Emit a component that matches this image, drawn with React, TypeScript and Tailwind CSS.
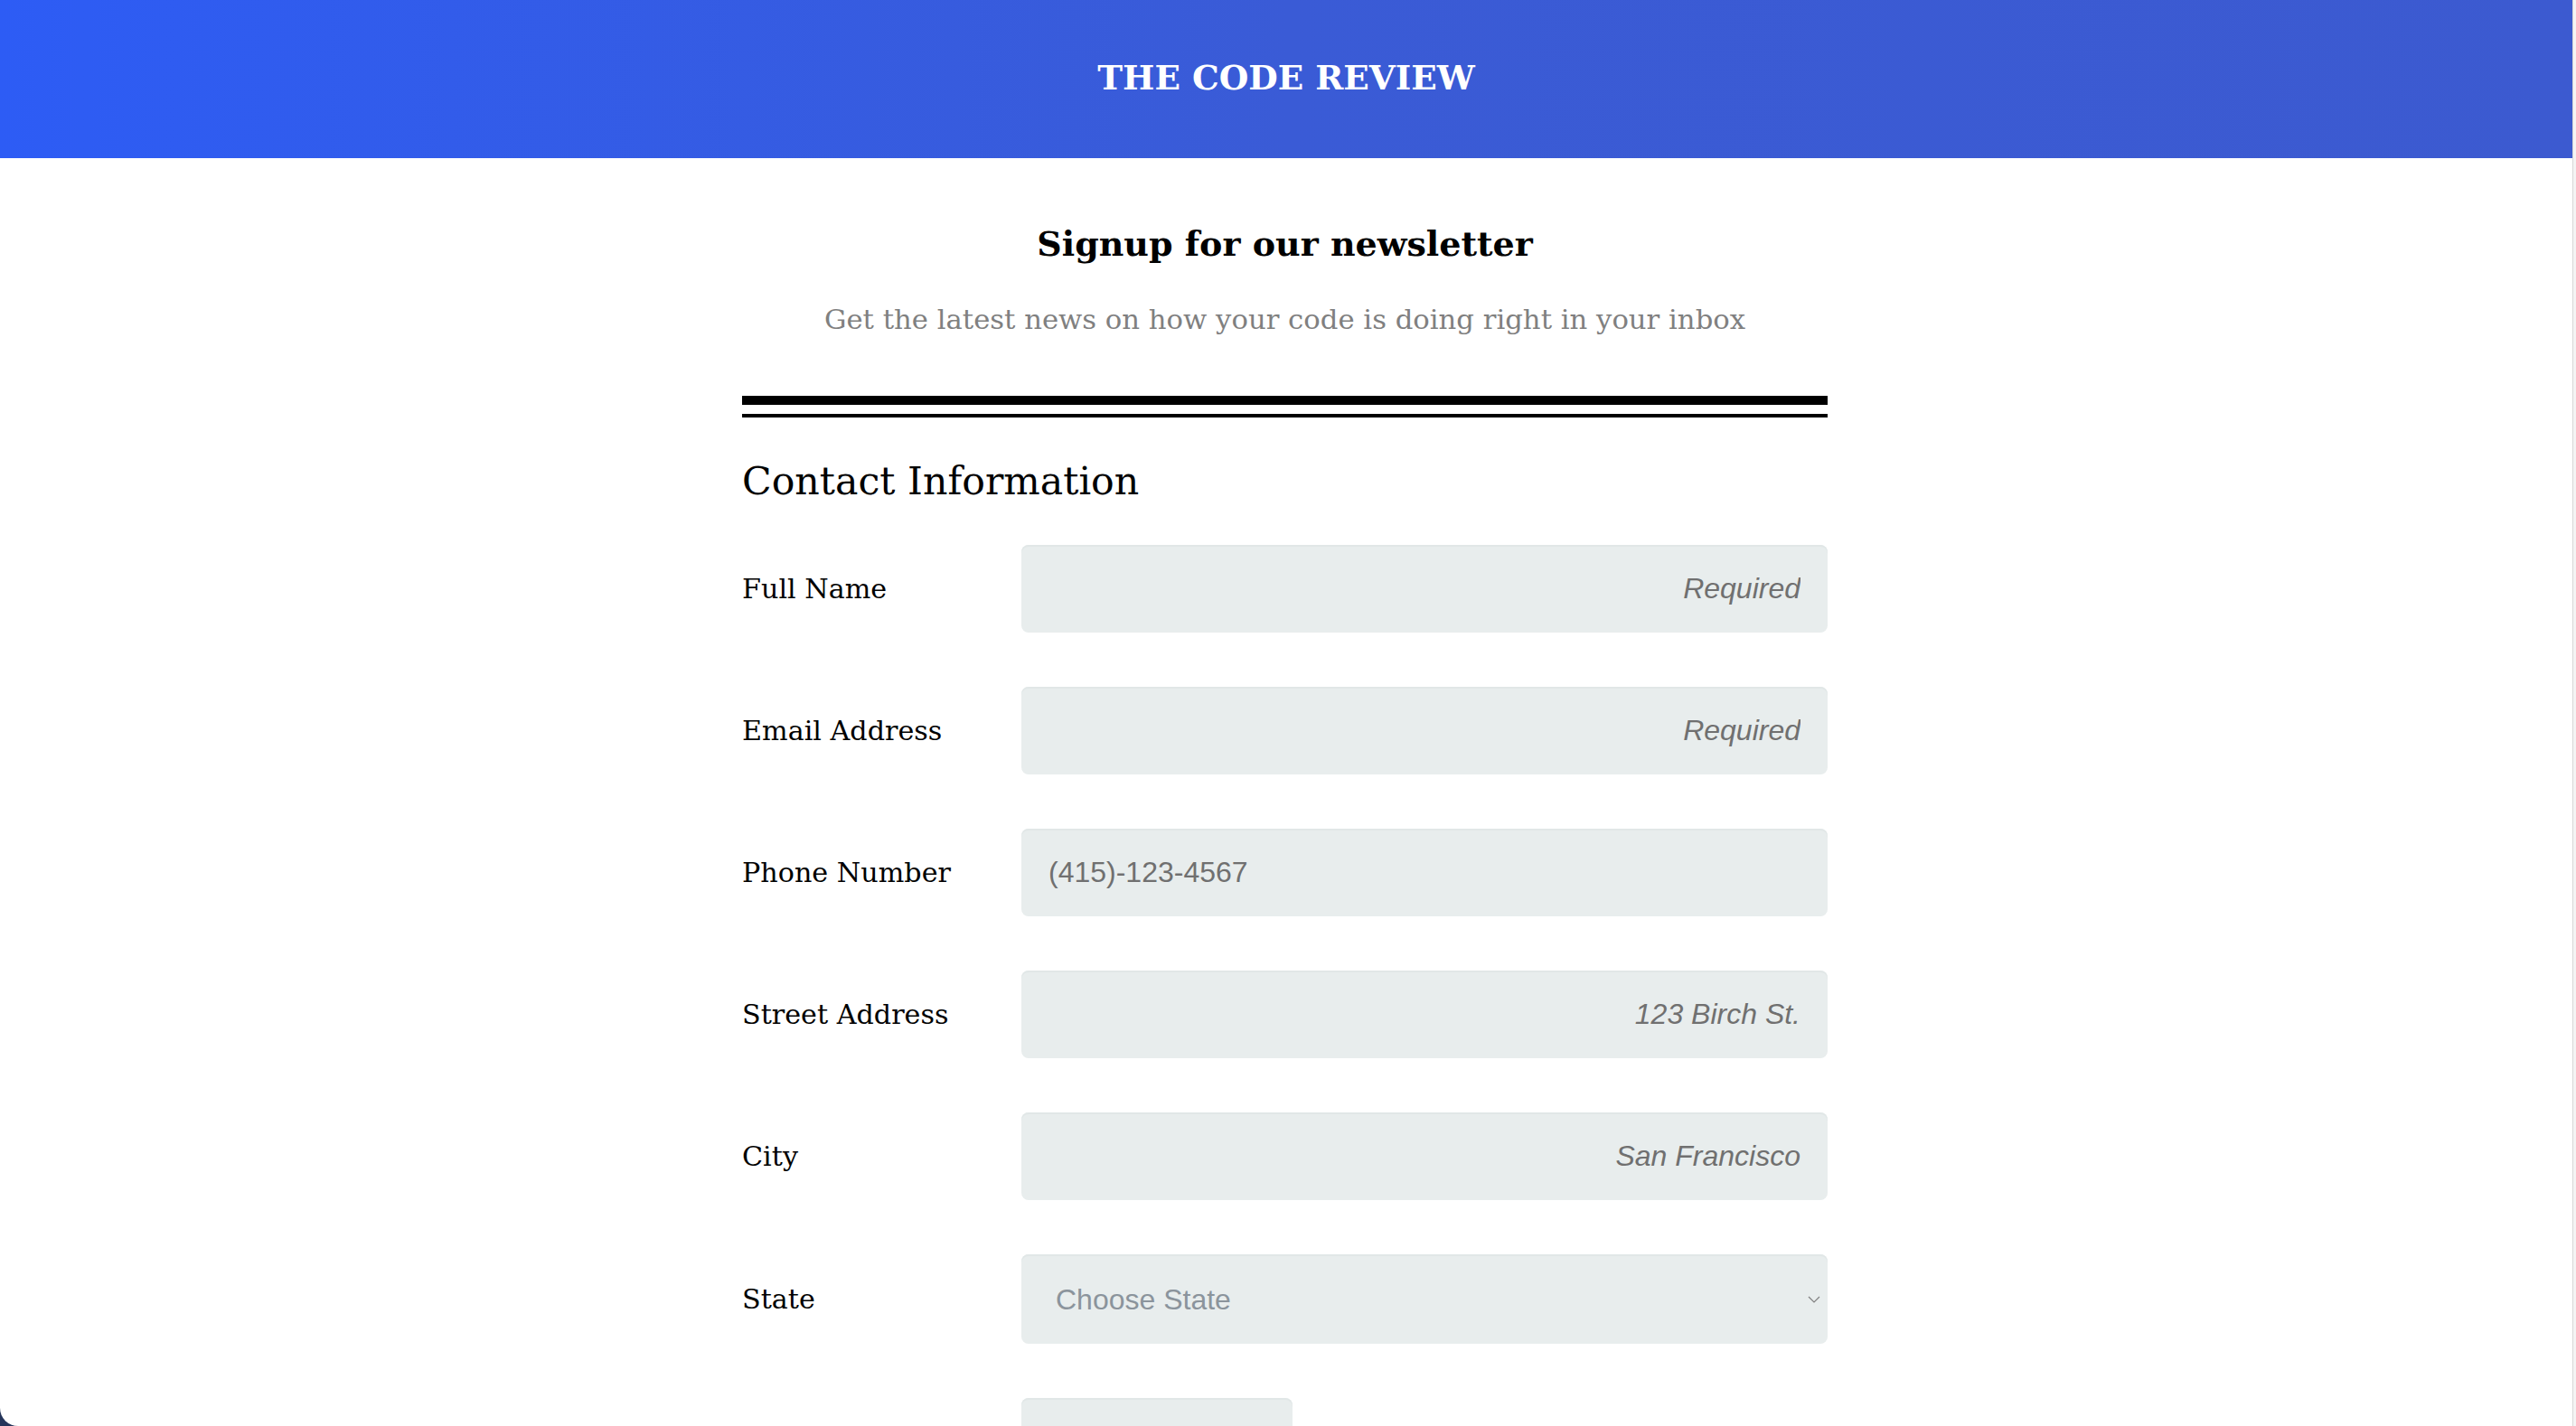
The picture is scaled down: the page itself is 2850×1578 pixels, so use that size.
import React from "react";

const serif = "font-['DejaVu_Serif',serif]";

function Row({ label, children }: { label: string; children: React.ReactNode }) {
  return (
    <div className="flex items-center">
      <div className={`w-[309px] shrink-0 text-[30.2px] leading-none text-black ${serif}`}>{label}</div>
      <div className="flex-1">{children}</div>
    </div>
  );
}

function TextInput({ placeholder, left }: { placeholder: string; left?: boolean }) {
  return (
    <input
      type="text"
      placeholder={placeholder}
      className={`block h-[97px] w-full rounded-[8px] bg-[#e8eded] px-[30px] text-[32px] font-['Liberation_Sans',sans-serif] text-[#6f6f6f] shadow-[inset_0_2px_0_#e1e7e7] outline-none placeholder:text-[#707070] ${
        left ? "text-left" : "text-right placeholder:italic"
      }`}
    />
  );
}

export default function App() {
  return (
    <div className="relative flex h-[1578px] w-full overflow-hidden bg-white">
      <div className="flex min-w-0 flex-1 flex-col">
        <header className="flex h-[175px] shrink-0 items-center justify-center bg-linear-to-r from-[#2d5cf5] via-[#3a5bd6] via-50% to-[#3c5ad0] pb-[1px]">
          <h1 className={`text-[37.4px] font-bold leading-none text-white ${serif}`}>THE CODE REVIEW</h1>
        </header>
        <div className="pr-[3px]">
          <main className="mx-auto flex w-[1201px] flex-col">
            <h2 className={`mt-[76px] text-center text-[38px] font-bold leading-none text-black ${serif}`}>
              Signup for our newsletter
            </h2>
            <p className={`mt-[50px] text-center text-[30.7px] leading-none text-[#808080] ${serif}`}>
              Get the latest news on how your code is doing right in your inbox
            </p>
            <div className="mt-[68px] h-[10px] bg-black" />
            <div className="mt-[10px] h-[4px] bg-black" />
            <h3 className={`mt-[49px] text-[42.7px] leading-none text-black ${serif}`}>Contact Information</h3>
            <form className="mt-[50px] flex flex-col gap-[60px]">
              <Row label="Full Name">
                <TextInput placeholder="Required" />
              </Row>
              <Row label="Email Address">
                <TextInput placeholder="Required" />
              </Row>
              <Row label="Phone Number">
                <TextInput placeholder="(415)-123-4567" left />
              </Row>
              <Row label="Street Address">
                <TextInput placeholder="123 Birch St." />
              </Row>
              <Row label="City">
                <TextInput placeholder="San Francisco" />
              </Row>
              <Row label="State">
                <div className="relative">
                  <select
                    defaultValue=""
                    className="block h-[99px] w-full appearance-none rounded-[8px] bg-[#e8eded] pl-[38px] pr-[40px] text-[32px] font-['Liberation_Sans',sans-serif] text-[#8b949c] shadow-[inset_0_2px_0_#e1e7e7] outline-none"
                  >
                    <option value="" disabled>
                      Choose State
                    </option>
                    <option value="CA">California</option>
                    <option value="NY">New York</option>
                  </select>
                  <svg
                    className="pointer-events-none absolute right-[8px] top-1/2 h-[10px] w-[14px] -translate-y-1/2"
                    viewBox="0 0 14 10"
                    fill="none"
                  >
                    <path d="M1 2l6 6 6-6" stroke="#808080" strokeWidth="1.2" />
                  </svg>
                </div>
              </Row>
              <div className="flex">
                <div className="w-[309px] shrink-0" />
                <div className="h-[97px] w-[300px] rounded-[8px] bg-[#e8eded] shadow-[inset_0_2px_0_#e1e7e7]" />
              </div>
            </form>
          </main>
        </div>
      </div>
      <div className="w-[4px] shrink-0 border-l border-[#d8d8d8] bg-[#f4f4f4]" />
      <div className="absolute bottom-0 left-0 h-[20px] w-[20px] bg-[#25355a]">
        <div className="h-full w-full rounded-bl-[20px] bg-white" />
      </div>
    </div>
  );
}
